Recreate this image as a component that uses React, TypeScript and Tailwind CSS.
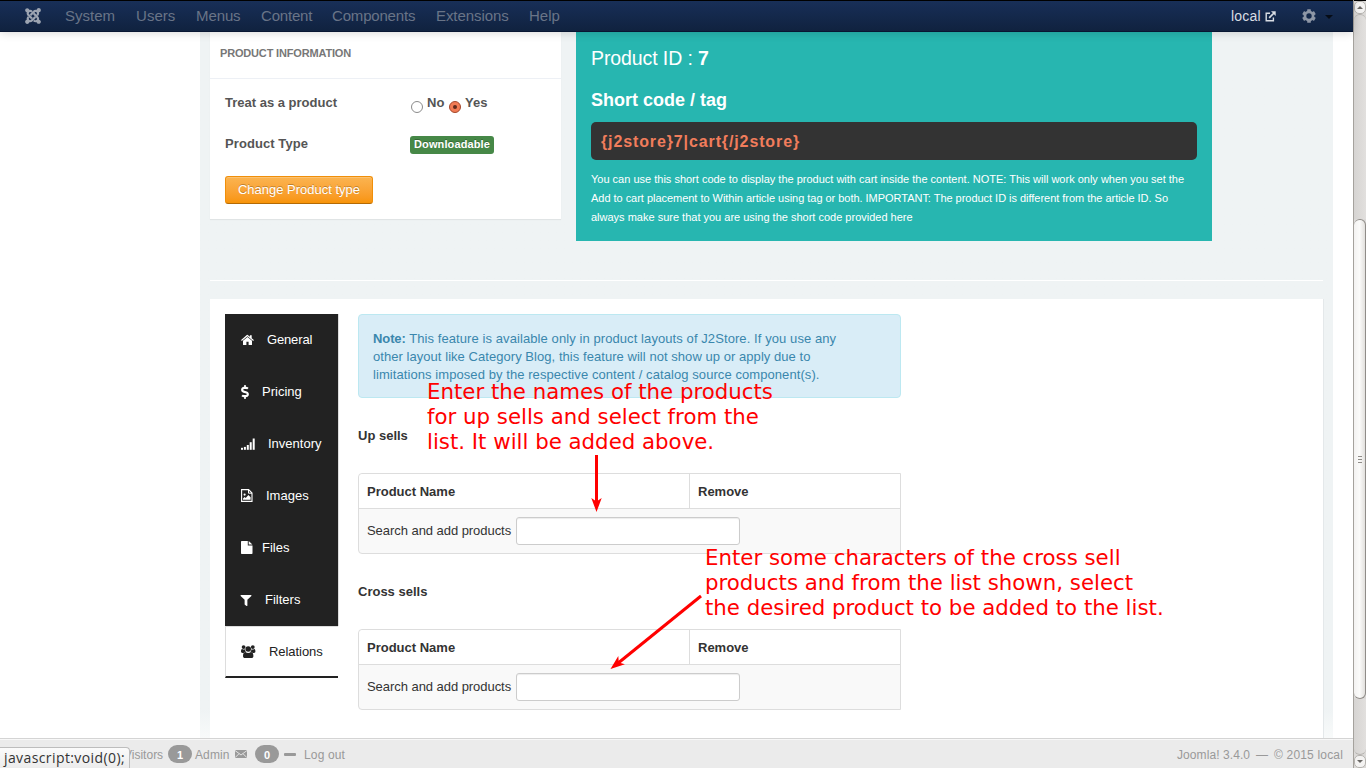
import type { ReactNode } from 'react';
import { FaJoomla, FaDollarSign, FaFilter } from 'react-icons/fa';

const menu: { label: string; cls: string }[] = [
  { label: 'System', cls: 'w-[71px]' },
  { label: 'Users', cls: 'w-[60px] tracking-[0.05px]' },
  { label: 'Menus', cls: 'w-[65px] tracking-[-0.1px]' },
  { label: 'Content', cls: 'w-[71px] tracking-[-0.2px]' },
  { label: 'Components', cls: 'w-[104px] tracking-[-0.18px]' },
  { label: 'Extensions', cls: 'w-[93px] tracking-[-0.07px]' },
  { label: 'Help', cls: 'w-[40px]' },
];

function HomeIcon() {
  return (
    <svg width="13" height="12" viewBox="0 0 13 12" fill="currentColor">
      <path d="M6.5 3 L11 6.8 V10.4 a.5 .5 0 0 1 -.5 .5 H7.6 V7.7 H5.4 V10.9 H2.5 a.5 .5 0 0 1 -.5 -.5 V6.8 Z" />
      <path d="M6.5 0.8 L8.9 2.8 V1.2 H10.7 V4.3 L12.9 6.1 L12.2 6.9 L6.5 2.2 L.8 6.9 L.1 6.1 L5.8 1.1 Q6.5 .5 7.2 1.1 Z" />
    </svg>
  );
}

function SignalIcon() {
  return (
    <svg className="mb-px" width="14" height="12" viewBox="0 0 14 12" fill="currentColor">
      <rect x="0" y="9.8" width="2" height="2" />
      <rect x="2.9" y="8.9" width="2" height="2.9" />
      <rect x="5.8" y="7" width="2" height="4.8" />
      <rect x="8.7" y="4.2" width="2" height="7.6" />
      <rect x="11.7" y="0.5" width="2" height="11.3" />
    </svg>
  );
}

function ImageFileIcon() {
  return (
    <svg className="mb-px" width="12" height="13" viewBox="0 0 12 13" fill="none" stroke="currentColor">
      <path d="M.6 .6 H7.6 L11 4 V12.4 H.6 Z" strokeWidth="1.1" />
      <path d="M7.5 .8 V4.2 H11" />
      <circle cx="3.6" cy="5.6" r="1.1" fill="currentColor" stroke="none" />
      <path d="M2 10.8 V9.4 L3.6 7.9 L4.7 9 L7.4 6.1 L9.6 8.3 V10.8 Z" fill="currentColor" stroke="none" />
    </svg>
  );
}

function FileIcon() {
  return (
    <svg className="mb-px" width="12" height="13" viewBox="0 0 12 13" fill="currentColor">
      <path d="M.7 0 H6.8 V4.4 H11.5 V12.3 a.7 .7 0 0 1 -.7 .7 H.7 A.7 .7 0 0 1 0 12.3 V.7 A.7 .7 0 0 1 .7 0 Z" />
      <path d="M7.7 .1 L11.4 3.6 H7.7 Z" />
    </svg>
  );
}

function GroupIcon() {
  return (
    <svg width="15" height="13" viewBox="0 0 15 13" fill="currentColor">
      <circle cx="2.6" cy="2.1" r="1.9" />
      <circle cx="11.8" cy="2.1" r="1.9" />
      <circle cx="7.2" cy="4" r="2.8" />
      <path d="M0 6.6 C0 4.7 .4 3.8 1.2 3.9 C2 4.6 3.2 4.7 3.9 4.3 C4 5.3 4.4 6.2 5 6.7 C4 6.7 3.2 7.1 2.7 7.9 H1.5 C.5 7.9 0 7.4 0 6.6 Z" />
      <path d="M14.4 6.6 C14.4 4.7 14 3.8 13.2 3.9 C12.4 4.6 11.2 4.7 10.5 4.3 C10.4 5.3 10 6.2 9.4 6.7 C10.4 6.7 11.2 7.1 11.7 7.9 H12.9 C13.9 7.9 14.4 7.4 14.4 6.6 Z" />
      <path d="M2 10.9 C2 8.6 3 7 4.5 7 C6 8.2 8.4 8.2 9.9 7 C11.4 7 12.4 8.6 12.4 10.9 C12.4 12.3 11.6 13 10.5 13 H3.9 C2.8 13 2 12.3 2 10.9 Z" />
    </svg>
  );
}

function GearIcon() {
  return (
    <svg width="14" height="14" viewBox="0 0 14 14">
      <g fill="#8e97a6">
        <rect x="5.2" y="0.2" width="3.6" height="13.6" rx=".5" />
        <rect x="5.2" y="0.2" width="3.6" height="13.6" rx=".5" transform="rotate(60 7 7)" />
        <rect x="5.2" y="0.2" width="3.6" height="13.6" rx=".5" transform="rotate(120 7 7)" />
        <circle cx="7" cy="7" r="5.4" />
      </g>
      <circle cx="7" cy="7" r="2.7" fill="#14294b" />
    </svg>
  );
}

function NewTabIcon() {
  return (
    <svg width="11" height="11" viewBox="0 0 11 11" fill="none" stroke="currentColor" strokeWidth="1.4">
      <path d="M5 2.2 H1.2 V9.8 H8.4 V6.6" />
      <path d="M4.2 6.8 L9 2" strokeWidth="1.7" />
      <path d="M6 .3 H10.7 V5 Z" fill="currentColor" stroke="none" />
    </svg>
  );
}

const tabs: { label: string; icon: ReactNode; gap: string }[] = [
  { label: 'General', icon: <HomeIcon />, gap: 'gap-[13px] tracking-[-0.15px]' },
  { label: 'Pricing', icon: <FaDollarSign className="mb-px -ml-[3px] h-[14px] w-[14px]" />, gap: 'gap-[10px]' },
  { label: 'Inventory', icon: <SignalIcon />, gap: 'gap-[13px]' },
  { label: 'Images', icon: <ImageFileIcon />, gap: 'gap-[13px]' },
  { label: 'Files', icon: <FileIcon />, gap: 'gap-[9px]' },
  { label: 'Filters', icon: <FaFilter className="-ml-px h-[11px] w-[12px]" />, gap: 'gap-[13px]' },
];

function ProductTable() {
  return (
    <div className="h-[81px] w-[543px] rounded-l-[4px] border border-[#dddddd] bg-[#f9f9f9]">
      <div className="flex h-[34px] rounded-tl-[4px] bg-white font-bold leading-[36px]">
        <div className="w-[330px] pl-2">Product Name</div>
        <div className="grow border-l border-[#dddddd] pl-2">Remove</div>
      </div>
      <div className="flex h-[45px] items-center border-t border-[#dddddd] pl-2">
        <label className="w-[149px] tracking-[-0.05px]">Search and add products</label>
        <input
          type="text"
          className="h-[28px] w-[224px] rounded-[3px] border border-[#cccccc] bg-white shadow-[inset_0_1px_1px_rgba(0,0,0,0.075)] outline-none"
        />
      </div>
    </div>
  );
}

function ScrollArrow({ up }: { up?: boolean }) {
  return (
    <div className="flex h-[13px] w-[12px] items-center justify-center rounded-[5px] border border-[#b5b3af] bg-[#f4f3f2]">
      <svg width="6" height="3" viewBox="0 0 6 3" fill="#6a6865">
        <path d={up ? 'M0 3 L3 0 L6 3 Z' : 'M0 0 L3 3 L6 0 Z'} />
      </svg>
    </div>
  );
}

function Badge({ children }: { children: ReactNode }) {
  return (
    <span className="flex h-[18px] w-[24px] items-center justify-center rounded-full bg-[#999999] pt-px text-[11px] font-bold text-white">
      {children}
    </span>
  );
}

export default function App() {
  return (
    <div className="relative flex h-[768px] w-[1366px] overflow-hidden bg-white font-['Liberation_Sans',sans-serif] text-[13px] leading-[18px] text-[#333333]">
      <div className="flex w-[1353px] flex-col">
        <header className="relative z-10 flex h-[32px] shrink-0 items-center border-y border-t-black border-b-[#081632] bg-linear-to-b from-[#182f58] to-[#10223f] pl-[24px] text-[15px] text-[#697487] shadow-[0_1px_10px_rgba(0,0,0,0.16)]">
          <FaJoomla className="mr-[23px] h-[18px] w-[18px] text-[#9ca4b1]" />
          {menu.map((m) => (
            <span key={m.label} className={m.cls}>
              {m.label}
            </span>
          ))}
          <div className="ml-auto flex items-center text-[#d9dde3]">
            <span className="w-[34px] text-[14px] tracking-[0.2px]">local</span>
            <NewTabIcon />
            <span className="ml-[26px]">
              <GearIcon />
            </span>
            <svg className="mt-[2px] mr-[20px] ml-[9px]" width="8" height="4" viewBox="0 0 8 4" fill="#060c16">
              <path d="M0 0 H8 L4 4 Z" />
            </svg>
          </div>
        </header>

        <main className="ml-[200px] h-[706px] w-[1133px] bg-[#eff3f4] bg-linear-to-b from-[#eff3f4] from-[96%] to-[#f8fafa] px-[10px]">
          <div className="flex h-[209px] gap-[15px]">
            <section className="h-[187px] w-[351px] bg-white shadow-[0_1px_1px_rgba(0,0,0,0.06)]">
              <h2 className="h-[47px] border-b border-[#edf0f5] pl-[10px] text-[11px] leading-[43px] font-bold tracking-[-0.17px] text-[#777777]">
                PRODUCT INFORMATION
              </h2>
              <div className="flex h-[48px] items-center pl-[15px] font-bold text-[#555555]">
                <span className="w-[186px]">Treat as a product</span>
                <span className="mt-[7px] mr-[4px] h-[12px] w-[12px] rounded-full border border-[#8b8b8b] bg-white" />
                <span className="w-[22px]">No</span>
                <span className="mt-[7px] mr-[4px] flex h-[12px] w-[12px] items-center justify-center rounded-full border border-[#a4472c] bg-[#f17b54]">
                  <span className="h-[4px] w-[4px] rounded-full bg-[#5e2a1c]" />
                </span>
                <span>Yes</span>
              </div>
              <div className="flex h-[36px] items-center pl-[15px] font-bold text-[#555555]">
                <span className="mb-[2px] w-[185px] tracking-[0.08px]">Product Type</span>
                <span className="h-[18px] w-[84px] rounded-[3px] bg-[#468847] text-center text-[11px] leading-[17px] tracking-[0.12px] text-white [text-shadow:0_-1px_0_rgba(0,0,0,0.25)]">
                  Downloadable
                </span>
              </div>
              <button className="mt-[13px] ml-[15px] block h-[28px] w-[148px] rounded-[3px] border border-[#f08f0a] border-b-[#b46a05] bg-linear-to-b from-[#fbb450] to-[#f89406] pb-px leading-[25px] text-white shadow-[inset_0_1px_0_rgba(255,255,255,0.2)] [text-shadow:0_-1px_0_rgba(0,0,0,0.25)]">
                Change Product type
              </button>
            </section>

            <section className="h-[209px] w-[636px] bg-[#27b6b0] px-[15px] text-white">
              <h3 className="h-[52px] text-[19.5px] leading-[52px] tracking-[-0.1px]">
                Product ID : <b>7</b>
              </h3>
              <h4 className="h-[38px] text-[18px] leading-[33px] font-bold">Short code / tag</h4>
              <div className="h-[38px] rounded-[5px] bg-[#333333] pl-[10px] text-[16px] leading-[40px] font-bold tracking-[0.88px] text-[#f17d5c]">
                {'{j2store}7|cart{/j2store}'}
              </div>
              <p className="mt-[10px] text-[11px] leading-[19px] whitespace-nowrap">
                You can use this short code to display the product with cart inside the content. NOTE: This will work only when you set the
                <br />
                <span className="tracking-[-0.03px]">
                  Add to cart placement to Within article using tag or both. IMPORTANT: The product ID is different from the article ID. So
                </span>
                <br />
                always make sure that you are using the short code provided here
              </p>
            </section>
          </div>

          <hr className="mt-[39px] mb-[18px] border-white" />

          <div className="flex h-[439px] gap-[19px] bg-white pt-[15px] pl-[15px] shadow-[1px_0_0_#e4e8ea]">
            <nav className="flex h-[364px] w-[114px] flex-col text-white">
              {tabs.map((t) => (
                <a key={t.label} className={`flex h-[52px] items-center border-r border-[#dddddd] bg-[#222222] pl-[16px] ${t.gap}`}>
                  {t.icon}
                  <span>{t.label}</span>
                </a>
              ))}
              <a className="mr-px flex h-[52px] items-center gap-[13px] border-t border-b-2 border-l border-t-[#dddddd] border-b-[#222222] border-l-[#dddddd] bg-white pl-[15px] text-[#222222]">
                <GroupIcon />
                <span className="tracking-[-0.05px]">Relations</span>
              </a>
            </nav>

            <div className="w-[543px]">
              <div className="h-[84px] rounded-[4px] border border-[#bce8f1] bg-[#d9edf7] pt-[15px] pl-[14px] whitespace-nowrap text-[#3a87ad]">
                <span className="tracking-[0.085px]">
                  <b className="tracking-[-0.1px]">Note:</b> This feature is available only in product layouts of J2Store. If you use any
                </span>
                <br />
                <span className="tracking-[0.05px]">other layout like Category Blog, this feature will not show up or apply due to</span>
                <br />
                <span className="tracking-[0.075px]">limitations imposed by the respective content / catalog source component(s).</span>
              </div>
              <h5 className="mt-[29px] mb-[28px] font-bold">Up sells</h5>
              <ProductTable />
              <h5 className="mt-[29px] mb-[28px] font-bold">Cross sells</h5>
              <ProductTable />
            </div>
          </div>
        </main>

        <footer className="flex h-[30px] items-center border-t border-[#d4d4d4] bg-[#ebebeb] pt-px pr-[10px] pl-[124px] text-[12px] text-[#999999] shadow-[inset_0_1px_0_#f8f8f8]">
          <span className="w-[44px] pt-px">Visitors</span>
          <Badge>1</Badge>
          <span className="ml-[3px] w-[40px] pt-px tracking-[0.1px]">Admin</span>
          <svg width="12" height="8" viewBox="0 0 12 8">
            <rect width="12" height="8" fill="#999999" />
            <path d="M0 .5 L6 5 L12 .5 M0 7.7 L4 3.7 M12 7.7 L8 3.7" fill="none" stroke="#ebebeb" strokeWidth=".9" />
          </svg>
          <span className="ml-[8px]">
            <Badge>0</Badge>
          </span>
          <span className="mr-[8px] ml-[5px] h-[3px] w-[12px] rounded-[1px] bg-[#999999]" />
          <span className="pt-px tracking-[0.15px]">Log out</span>
          <span className="ml-auto flex gap-[6px] pt-px">
            <span className="tracking-[0.08px]">Joomla! 3.4.0</span>
            <span>—</span>
            <span className="tracking-[0.17px]">© 2015 local</span>
          </span>
        </footer>
      </div>

      <aside className="flex w-[13px] flex-col border-l border-[#a5a29d] bg-[#dcdad8]">
        <div className="h-px bg-black" />
        <ScrollArrow up />
        <div className="h-[205px] rounded-t-[6px] border-t border-[#b5b3af] bg-linear-to-r from-[#d6d4d2] to-[#e2e0de]" />
        <div className="flex h-[480px] flex-col items-center justify-center gap-[2px] rounded-[6px] border border-l-0 border-[#8f8c88] bg-linear-to-r from-[#f3f2f1] via-[#fbfbfa] to-[#e2e0dd]">
          <span className="h-px w-[4px] bg-[#8f8c88]" />
          <span className="h-px w-[4px] bg-[#8f8c88]" />
          <span className="h-px w-[4px] bg-[#8f8c88]" />
        </div>
        <div className="h-[56px] rounded-b-[6px] border-b border-[#b5b3af] bg-linear-to-r from-[#d6d4d2] to-[#e2e0de]" />
        <ScrollArrow />
      </aside>

      <div className="absolute bottom-0 left-0 z-20 h-[21px] w-[130px] rounded-tr-[4px] border-t border-r border-[#bdbdbd] bg-linear-to-b from-[#fbfbfb] to-[#ececec] pl-[4px] font-['Open_Sans',sans-serif] text-[14px] leading-[20px] tracking-[0.4px] whitespace-nowrap text-[#333333]">
        javascript:void(0);
      </div>

      <p className="absolute top-[379px] left-[427px] z-20 font-['DejaVu_Sans',sans-serif] text-[21.3px] leading-[25px] whitespace-nowrap text-[#ff0000]">
        Enter the names of the products
        <br />
        for up sells and select from the
        <br />
        list. It will be added above.
      </p>
      <p className="absolute top-[545px] left-[705px] z-20 font-['DejaVu_Sans',sans-serif] text-[21.3px] leading-[25px] whitespace-nowrap text-[#ff0000]">
        Enter some characters of the cross sell
        <br />
        products and from the list shown, select
        <br />
        the desired product to be added to the list.
      </p>
      <svg className="absolute top-[450px] left-[580px] z-20" width="130" height="225" viewBox="580 450 130 225" fill="#ff0000" stroke="#ff0000">
        <path d="M596.5 455 V503" strokeWidth="3" />
        <path d="M596.5 512 L591.3 498 L596.5 501.5 L601.7 498 Z" stroke="none" />
        <path d="M701 596 L617 664" strokeWidth="3" />
        <path d="M610.5 669 L618.3 656 L618.8 662.4 L624.9 664.2 Z" stroke="none" />
      </svg>
    </div>
  );
}
